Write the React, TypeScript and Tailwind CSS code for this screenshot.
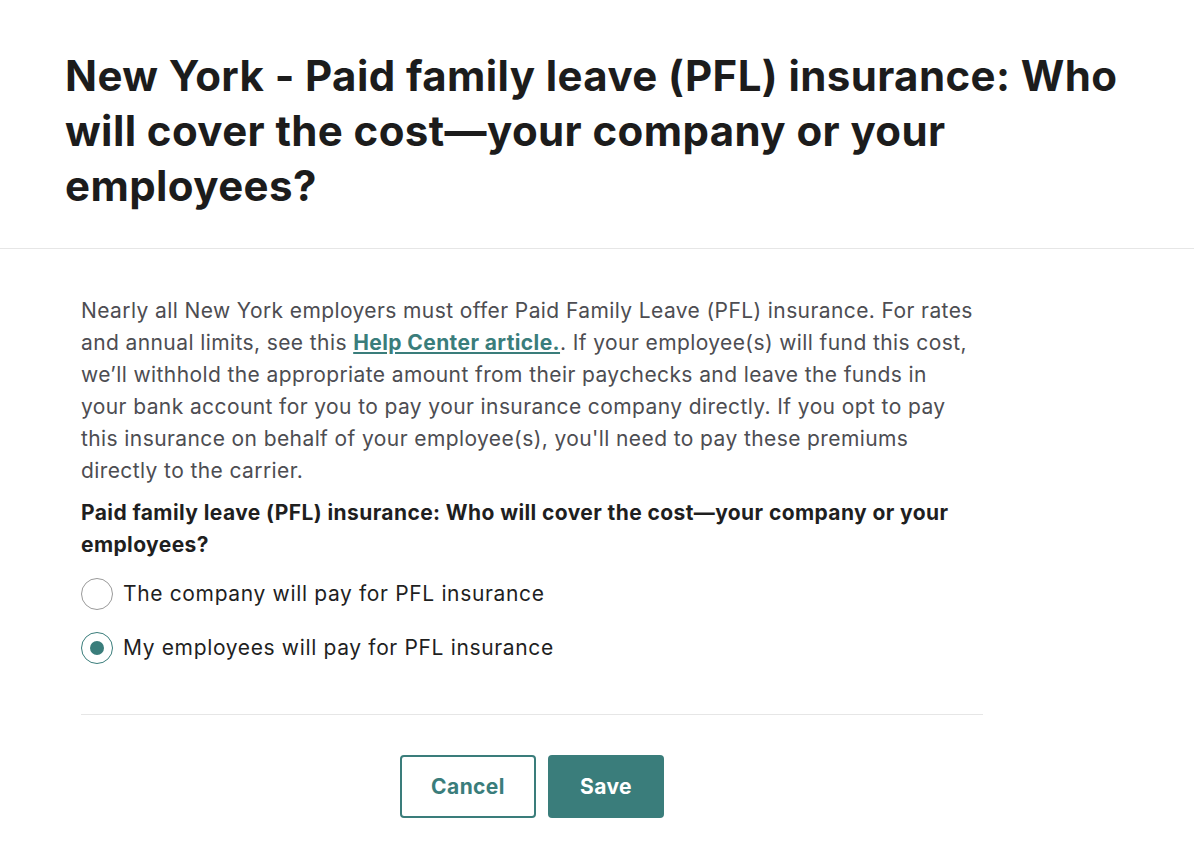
import React, { useState } from "react";

const options = [
  { id: "company", label: "The company will pay for PFL insurance" },
  { id: "employees", label: "My employees will pay for PFL insurance" },
];

const App: React.FC = () => {
  const [payer, setPayer] = useState("employees");

  return (
    <div className="min-h-screen bg-white" style={{ fontFamily: "Inter, 'Open Sans', sans-serif" }}>
      <header className="border-b border-[#e6e6e6] pl-[65px] pr-[60px] pt-[48px] pb-[35px]">
        <h1 className="text-[42px] leading-[55px] font-bold tracking-[0.4px] text-[#1c1c1c]">
          New York - Paid family leave (PFL) insurance: Who will cover the cost—your company or your employees?
        </h1>
      </header>

      <main className="pl-[81px] pt-[46px]">
        <div className="w-[902px] tracking-[0.4px]">
          <p className="max-w-[894px] text-[21px] leading-[32px] text-[#4d4d52]">
            Nearly all New York employers must offer Paid Family Leave (PFL) insurance. For rates and annual limits, see
            this{" "}
            <a href="#" className="font-bold text-[#3a7d7b] underline underline-offset-2">
              Help Center article.
            </a>
            . If your employee(s) will fund this cost, we’ll withhold the appropriate amount from their paychecks and
            leave the funds in your bank account for you to pay your insurance company directly. If you opt to pay this
            insurance on behalf of your employee(s), you'll need to pay these premiums directly to the carrier.
          </p>

          <p className="mt-[10px] text-[21px] leading-[32px] font-bold text-[#1f1f1f]">
            Paid family leave (PFL) insurance: Who will cover the cost—your company or your employees?
          </p>

          <div className="mt-[17px] flex flex-col gap-[22px]">
            {options.map((opt) => {
              const checked = payer === opt.id;
              return (
                <label key={opt.id} className="flex items-center gap-[10px] cursor-pointer">
                  <input
                    type="radio"
                    name="payer"
                    className="sr-only"
                    checked={checked}
                    onChange={() => setPayer(opt.id)}
                  />
                  <span
                    className={`flex h-[32px] w-[32px] shrink-0 items-center justify-center rounded-full border ${
                      checked ? "border-[#3a7d7b]" : "border-[#9a9a9a]"
                    }`}
                  >
                    {checked && <span className="h-[14px] w-[14px] rounded-full bg-[#3a7d7b]" />}
                  </span>
                  <span className="text-[21px] leading-[32px] tracking-[0.65px] text-[#1f1f1f]">{opt.label}</span>
                </label>
              );
            })}
          </div>

          <div className="mt-[50px] border-t border-[#e6e6e6]" />

          <div className="mt-[40px] flex justify-center gap-[12px]">
            <button className="h-[63px] w-[136px] rounded-[4px] border-2 border-[#3a7d7b] bg-white text-[21px] font-bold text-[#3a7d7b]">
              Cancel
            </button>
            <button className="h-[63px] w-[116px] rounded-[4px] bg-[#3a7d7b] text-[21px] font-bold text-white">
              Save
            </button>
          </div>
        </div>
      </main>
    </div>
  );
};

export default App;
